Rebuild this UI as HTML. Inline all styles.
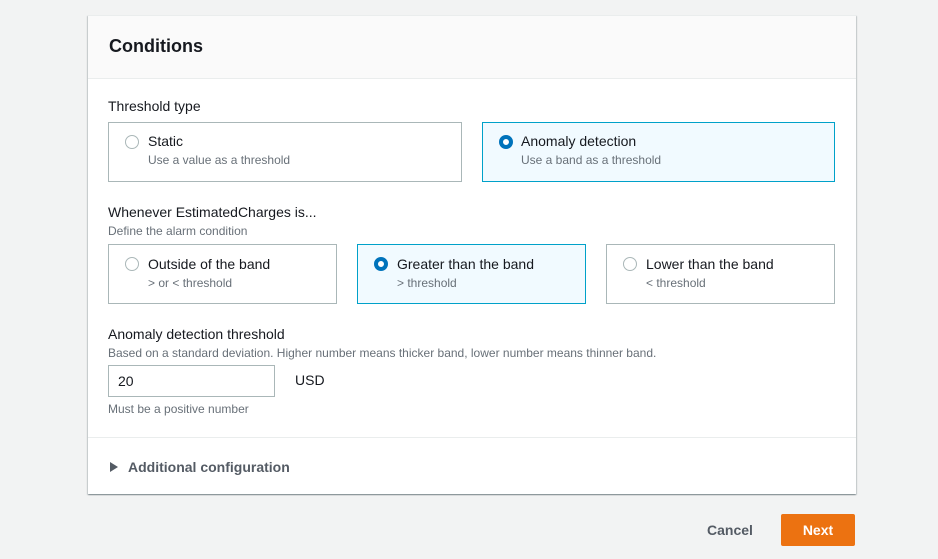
<!DOCTYPE html>
<html><head><style>
*{box-sizing:border-box;margin:0;padding:0}
body{width:938px;height:559px;background:#f2f3f3;font-family:"Liberation Sans",sans-serif;color:#16191f;position:relative;overflow:hidden}
.a{position:absolute}
.card{left:88px;top:15px;width:768px;height:479px;background:#fff;border-top:1px solid #eaeded;box-shadow:0 1px 1px rgba(0,28,36,.3),1px 1px 1px rgba(0,28,36,.15),-1px 1px 1px rgba(0,28,36,.15)}
.hdr{left:0;top:0;width:768px;height:63px;background:#fafafa;border-bottom:1px solid #eaeded}
.t{font-size:14px}
.d{font-size:12px;color:#687078}
.box{border:1px solid #aab7b8;background:#fff}
.sel{border-color:#00a1c9;background:#f1faff}
.r{width:14px;height:14px;border-radius:50%;border:1px solid #aab7b8;background:#fff}
.rs{border:4px solid #0073bb}
</style></head><body>
<div class="a card">
<div class="a hdr"><div class="a" style="left:21px;top:20px;font-size:18px;font-weight:bold">Conditions</div></div>
<div class="a t" style="left:20px;top:82px">Threshold type</div>
<div class="a box" style="left:20px;top:106px;width:354px;height:60px">
 <div class="a r" style="left:16px;top:12px"></div>
 <div class="a t" style="left:39px;top:10px">Static</div>
 <div class="a d" style="left:39px;top:30px">Use a value as a threshold</div></div>
<div class="a box sel" style="left:394px;top:106px;width:353px;height:60px">
 <div class="a r rs" style="left:16px;top:12px"></div>
 <div class="a t" style="left:38px;top:10px">Anomaly detection</div>
 <div class="a d" style="left:38px;top:30px">Use a band as a threshold</div></div>
<div class="a t" style="left:20px;top:188px">Whenever EstimatedCharges is...</div>
<div class="a d" style="left:20px;top:208px">Define the alarm condition</div>
<div class="a box" style="left:20px;top:228px;width:229px;height:60px">
 <div class="a r" style="left:16px;top:12px"></div>
 <div class="a t" style="left:39px;top:11px">Outside of the band</div>
 <div class="a d" style="left:39px;top:31px">&gt; or &lt; threshold</div></div>
<div class="a box sel" style="left:269px;top:228px;width:229px;height:60px">
 <div class="a r rs" style="left:16px;top:12px"></div>
 <div class="a t" style="left:39px;top:11px">Greater than the band</div>
 <div class="a d" style="left:39px;top:31px">&gt; threshold</div></div>
<div class="a box" style="left:518px;top:228px;width:229px;height:60px">
 <div class="a r" style="left:16px;top:12px"></div>
 <div class="a t" style="left:39px;top:11px">Lower than the band</div>
 <div class="a d" style="left:39px;top:31px">&lt; threshold</div></div>
<div class="a t" style="left:20px;top:310px">Anomaly detection threshold</div>
<div class="a d" style="left:20px;top:330px">Based on a standard deviation. Higher number means thicker band, lower number means thinner band.</div>
<div class="a box" style="left:20px;top:349px;width:167px;height:32px;border-color:#aab7b8"><div class="a t" style="left:9px;top:7px">20</div></div>
<div class="a t" style="left:207px;top:356px">USD</div>
<div class="a d" style="left:20px;top:386px">Must be a positive number</div>
<div class="a" style="left:0;top:421px;width:768px;border-top:1px solid #eaeded"></div>
<svg class="a" style="left:21px;top:445px" width="10" height="12"><path d="M1 1L9 6L1 11Z" fill="#545b64"/></svg>
<div class="a t" style="left:40px;top:443px;font-weight:bold;color:#545b64">Additional configuration</div>
</div>
<div class="a t" style="left:707px;top:522px;font-weight:bold;color:#545b64">Cancel</div>
<div class="a" style="left:781px;top:514px;width:74px;height:32px;background:#ec7211;border-radius:2px;color:#fff;font-weight:bold;font-size:14px;text-align:center;line-height:32px">Next</div>
</body></html>
